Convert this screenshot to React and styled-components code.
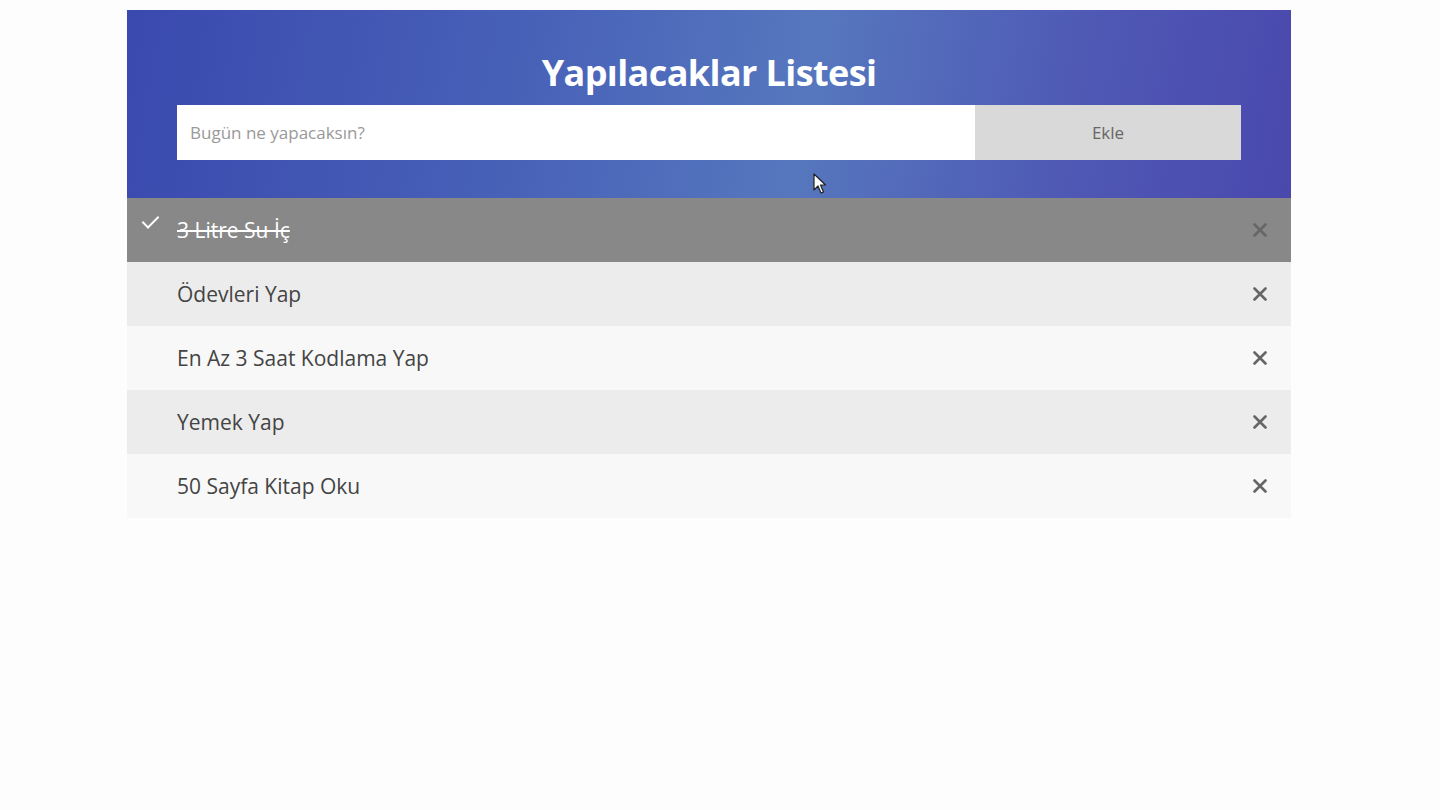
import React from 'react';
import styled, { createGlobalStyle } from 'styled-components';

const GlobalStyle = createGlobalStyle`
  html, body {
    margin: 0;
    padding: 0;
    background: #fdfdfd;
    font-family: "Open Sans", "Noto Sans", sans-serif;
  }
`;

const Page = styled.div`
  position: relative;
  width: 1440px;
  height: 810px;
  padding-top: 10px;
  box-sizing: border-box;
`;

const Container = styled.div`
  width: 1164px;
  margin-left: 127px;
`;

const Header = styled.div`
  height: 188px;
  box-sizing: border-box;
  padding: 36px 50px 0;
  background: linear-gradient(100deg, #3a49ae 0%, #4862b8 35%, #5677be 58%, #4f5ab5 80%, #4a48ad 100%);
  display: flex;
  flex-direction: column;
  align-items: center;
`;

const Title = styled.h2`
  margin: 0 0 6px;
  color: #fff;
  font-size: 36px;
  font-weight: 700;
  line-height: 53px;
  letter-spacing: -0.6px;
`;

const InputRow = styled.div`
  display: flex;
  width: 100%;
  height: 55px;
`;

const TaskInput = styled.input`
  width: 75%;
  box-sizing: border-box;
  border: none;
  margin: 0;
  padding: 0 13px;
  font-family: inherit;
  font-size: 17px;
  color: #333;
  background: #fff;
  outline: none;
  &::placeholder {
    color: #999;
  }
`;

const AddButton = styled.button`
  flex: 1;
  border: none;
  margin: 0;
  background: #d9d9d9;
  color: #666;
  font-family: inherit;
  font-size: 17px;
  cursor: pointer;
`;

const List = styled.ul`
  list-style: none;
  margin: 0;
  padding: 0;
`;

const Item = styled.li`
  position: relative;
  height: 64px;
  display: flex;
  align-items: center;
  padding-left: 50px;
  font-size: 21px;
  color: ${p => (p.$checked ? '#fff' : '#444')};
  text-decoration: ${p => (p.$checked ? 'line-through' : 'none')};
  background: ${p => (p.$checked ? '#888' : p.$odd ? '#ececec' : '#f8f8f8')};
`;

const Check = styled.span`
  position: absolute;
  left: 19px;
  top: 14px;
  width: 7px;
  height: 14px;
  border-style: solid;
  border-color: #fff;
  border-width: 0 2px 2px 0;
  transform: rotate(45deg);
`;

const Close = styled.span`
  position: absolute;
  right: 24px;
  top: 50%;
  transform: translateY(-50%);
  display: flex;
  color: #666;
`;

const Cursor = styled.svg`
  position: absolute;
  left: 813px;
  top: 173px;
`;

const CloseIcon = () => (
  <svg width="14" height="14" viewBox="0 0 14 14">
    <path d="M1.5 1.5 L12.5 12.5 M12.5 1.5 L1.5 12.5" stroke="currentColor" strokeWidth="2.6" strokeLinecap="round" />
  </svg>
);

const todos = [
  { text: '3 Litre Su İç', checked: true },
  { text: 'Ödevleri Yap' },
  { text: 'En Az 3 Saat Kodlama Yap' },
  { text: 'Yemek Yap' },
  { text: '50 Sayfa Kitap Oku' }
];

const App = () => (
  <Page>
    <GlobalStyle />
    <Container>
      <Header>
        <Title>Yapılacaklar Listesi</Title>
        <InputRow>
          <TaskInput type="text" placeholder="Bugün ne yapacaksın?" />
          <AddButton>Ekle</AddButton>
        </InputRow>
      </Header>
      <List>
        {todos.map((t, i) => (
          <Item key={t.text} $checked={t.checked} $odd={i % 2 === 1}>
            {t.checked && <Check />}
            {t.text}
            <Close>
              <CloseIcon />
            </Close>
          </Item>
        ))}
      </List>
    </Container>
    <Cursor width="14" height="22" viewBox="0 0 14 22">
      <path d="M1 1 L1 17 L5 13 L8 20 L10.5 19 L7.5 12 L12.5 12 Z" fill="#fff" stroke="#222" strokeWidth="1.2" strokeLinejoin="round" />
    </Cursor>
  </Page>
);

export default App;
